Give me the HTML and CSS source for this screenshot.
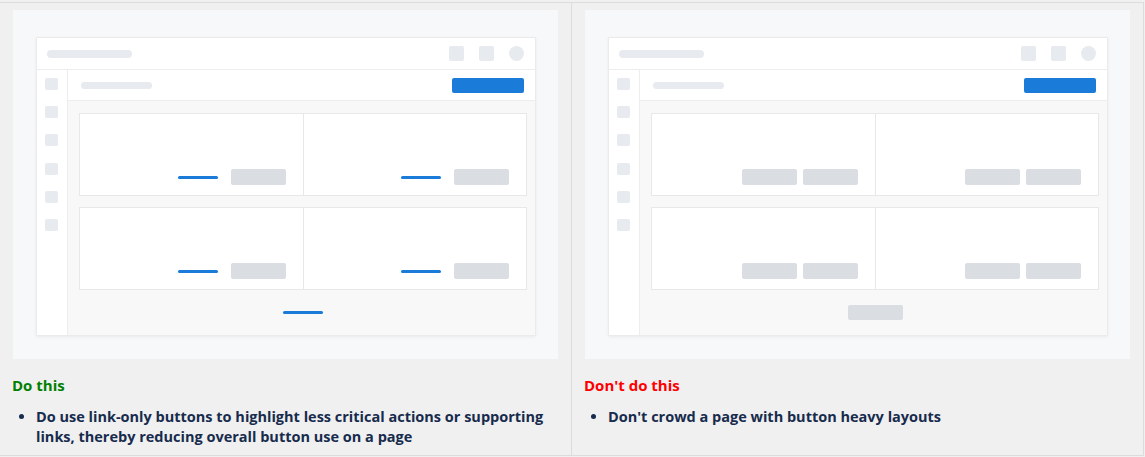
FILE: index.html
```html
<!DOCTYPE html>
<html lang="en">
<head>
<meta charset="utf-8">
<title>Buttons guidance</title>
<link rel="stylesheet" href="styles.css">
</head>
<body>
<div class="table">
  <div class="cell">
    <div class="illus">
      <div class="frame">
        <div class="topbar">
          <span class="skel skel-title"></span>
          <div class="icons"><span class="ico"></span><span class="ico"></span><span class="ico round"></span></div>
        </div>
        <div class="body">
          <div class="side">
            <span class="nav"></span><span class="nav"></span><span class="nav"></span><span class="nav"></span><span class="nav"></span><span class="nav"></span>
          </div>
          <div class="main">
            <div class="subbar"><span class="skel skel-sub"></span><span class="primary"></span></div>
            <div class="content">
              <div class="row">
                <div class="card"><span class="link"></span><span class="btn"></span></div>
                <div class="card"><span class="link"></span><span class="btn"></span></div>
              </div>
              <div class="row">
                <div class="card"><span class="link"></span><span class="btn"></span></div>
                <div class="card"><span class="link"></span><span class="btn"></span></div>
              </div>
              <div class="footer"><span class="link"></span></div>
            </div>
          </div>
        </div>
      </div>
    </div>
    <div class="text">
      <h4 class="title do">Do this</h4>
      <ul class="points">
        <li>Do use link-only buttons to highlight less critical actions or supporting links, thereby reducing overall button use on a page</li>
      </ul>
    </div>
  </div>
  <div class="cell divided">
    <div class="illus">
      <div class="frame">
        <div class="topbar">
          <span class="skel skel-title"></span>
          <div class="icons"><span class="ico"></span><span class="ico"></span><span class="ico round"></span></div>
        </div>
        <div class="body">
          <div class="side">
            <span class="nav"></span><span class="nav"></span><span class="nav"></span><span class="nav"></span><span class="nav"></span><span class="nav"></span>
          </div>
          <div class="main">
            <div class="subbar"><span class="skel skel-sub"></span><span class="primary"></span></div>
            <div class="content">
              <div class="row">
                <div class="card tight"><span class="btn"></span><span class="btn"></span></div>
                <div class="card tight"><span class="btn"></span><span class="btn"></span></div>
              </div>
              <div class="row">
                <div class="card tight"><span class="btn"></span><span class="btn"></span></div>
                <div class="card tight"><span class="btn"></span><span class="btn"></span></div>
              </div>
              <div class="footer"><span class="btn btn-footer"></span></div>
            </div>
          </div>
        </div>
      </div>
    </div>
    <div class="text">
      <h4 class="title dont">Don't do this</h4>
      <ul class="points">
        <li>Don't crowd a page with button heavy layouts</li>
      </ul>
    </div>
  </div>
</div>
</body>
</html>
```

FILE: styles.css
```css
* { box-sizing: border-box; }

html, body {
  margin: 0;
  padding: 0;
  background: #f0f0f0;
}

body {
  font-family: "Open Sans", "Noto Sans", "Liberation Sans", sans-serif;
  color: #172b4d;
}

.table {
  margin-top: 2px;
  width: 1144px;
  display: grid;
  grid-template-columns: 571px 572px;
  border-top: 1px solid #dcdcdc;
  border-bottom: 1px solid #dcdcdc;
  border-right: 1px solid #dcdcdc;
}

.cell {
  height: 452px;
  padding: 7px 13px 0 13px;
}

.cell.divided {
  border-left: 1px solid #dcdcdc;
}

.illus {
  width: 545px;
  height: 349px;
  background: #f7f8fa;
  padding: 27px 0 0 23px;
}

.frame {
  width: 500px;
  height: 299px;
  background: #fff;
  border: 1px solid #ebebeb;
  box-shadow: 0 1px 3px rgba(0, 0, 0, 0.06);
  display: flex;
  flex-direction: column;
}

.topbar {
  height: 32px;
  border-bottom: 1px solid #ededed;
  display: flex;
  align-items: center;
  justify-content: space-between;
  padding: 0 11px 0 10px;
}

.skel {
  display: block;
  background: #e7eaee;
  border-radius: 4px;
}

.skel-title { width: 85px; height: 8px; }
.skel-sub { width: 71px; height: 7px; }

.icons {
  display: flex;
  gap: 15px;
}

.ico {
  width: 15px;
  height: 15px;
  background: #e7eaee;
  border-radius: 2px;
}

.ico.round { border-radius: 50%; }

.body {
  flex: 1;
  display: flex;
}

.side {
  width: 31px;
  border-right: 1px solid #ededed;
  display: flex;
  flex-direction: column;
  gap: 16.2px;
  padding: 8px 0 0 8px;
}

.nav {
  width: 13px;
  height: 12px;
  background: #e7eaee;
  border-radius: 2px;
}

.main {
  flex: 1;
  display: flex;
  flex-direction: column;
}

.subbar {
  height: 31px;
  border-bottom: 1px solid #ededed;
  display: flex;
  align-items: center;
  justify-content: space-between;
  padding: 0 11px 0 13px;
}

.primary {
  width: 72px;
  height: 15px;
  background: #1a7bd8;
  border-radius: 2px;
}

.content {
  flex: 1;
  background: #f8f8f8;
  padding: 12px 8px 0 11px;
  display: flex;
  flex-direction: column;
  gap: 11px;
}

.row {
  height: 83px;
  background: #fff;
  border: 1px solid #e8e8e8;
  display: grid;
  grid-template-columns: 1fr 1fr;
}

.card {
  display: flex;
  justify-content: flex-end;
  align-items: flex-end;
  gap: 13px;
  padding: 0 17px 10px 0;
}

.card + .card { border-left: 1px solid #e8e8e8; }

.card .link { margin-bottom: 6px; }

.card.tight { gap: 6px; }

.link {
  display: block;
  width: 40px;
  height: 3px;
  background: #1a7bd8;
  border-radius: 2px;
}

.btn {
  display: block;
  width: 55px;
  height: 16px;
  background: #dadde1;
  border-radius: 2px;
}

.footer {
  display: flex;
  justify-content: center;
  align-items: flex-start;
}

.btn-footer { height: 15px; margin-top: 4px; }

.footer .link { margin-top: 10px; }

.text {
  margin-left: -1px;
}

.title {
  margin: 16px 0 0 0;
  font-size: 15px;
  line-height: 20px;
  font-weight: 700;
}

.title.do { color: #008000; }
.title.dont { color: #ff0000; }

.points {
  margin: 12px 0 0 0;
  padding-left: 24px;
  font-size: 14.5px;
  line-height: 20px;
  font-weight: 700;
  color: #172b4d;
}
```
